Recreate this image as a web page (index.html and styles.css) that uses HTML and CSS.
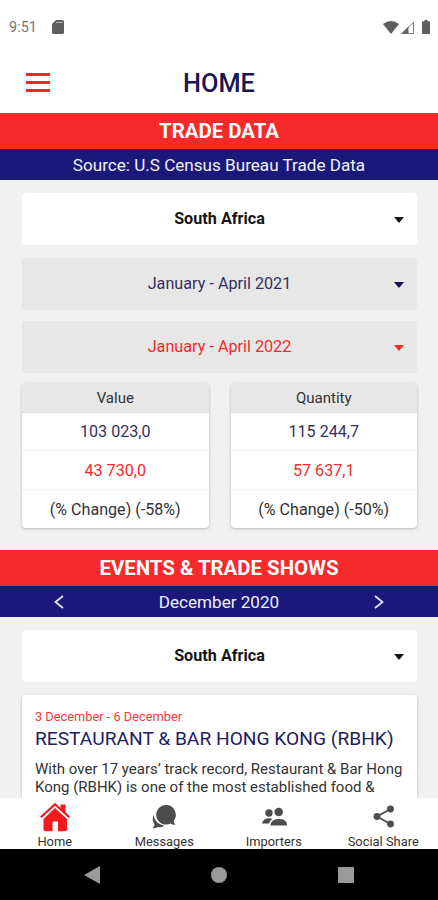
FILE: index.html
```
<!DOCTYPE html>
<html lang="en">
<head>
<meta charset="utf-8">
<meta name="viewport" content="width=device-width, initial-scale=1.0">
<title>Home</title>
<link rel="stylesheet" href="styles.css">
</head>
<body>
<div class="app">
	<div class="statusbar">
		<span class="time">9:51</span>
		<svg class="sd" width="12" height="14" viewBox="0 0 12 14"><path fill="#5e5e5e" d="M4 0h6.500Q12 0 12 1.500v11Q12 14 10.500 14h-9Q0 14 0 12.500V4z"/><path stroke="#bbb" d="M4 2.500h6.500"/></svg>
		<div class="signals">
			<svg width="16" height="13" viewBox="0 0 16 13"><path fill="#5e5e5e" d="M0 3Q8-3 16 3L8 13z"/></svg>
			<svg width="13" height="13" viewBox="0 0 13 13"><path fill="none" stroke="#777" d="M1.200 12.500L12.500 1.200v11.300z"/><path fill="#666" d="M0 13L7.500 5.500V13z"/></svg>
			<svg class="battery" width="8" height="14" viewBox="0 0 8 14"><path fill="#5e5e5e" d="M2.500 0h3v1.300H7q1 0 1 1V13q0 1-1 1H1q-1 0-1-1V2.300q0-1 1-1h1.500z"/></svg>
		</div>
	</div>

	<div class="header">
		<a class="menu" href="#"><i></i><i></i><i></i></a>
		<h1>HOME</h1>
	</div>

	<div class="content">
		<h2 class="bar-red">TRADE DATA</h2>
		<div class="bar-blue">Source: U.S Census Bureau Trade Data</div>

		<div class="section">
			<div class="select country">South Africa</div>
			<div class="select period navy">January - April 2021</div>
			<div class="select period red">January - April 2022</div>
			<div class="stats">
				<ul class="stat">
					<li class="title">Value</li>
					<li class="navy">103 023,0</li>
					<li class="red">43 730,0</li>
					<li>(% Change) (-58%)</li>
				</ul>
				<ul class="stat">
					<li class="title">Quantity</li>
					<li class="navy">115 244,7</li>
					<li class="red">57 637,1</li>
					<li>(% Change) (-50%)</li>
				</ul>
			</div>
		</div>

		<h2 class="bar-red">EVENTS &amp; TRADE SHOWS</h2>
		<div class="bar-blue month">
			<svg width="10" height="14" viewBox="0 0 10 14"><path d="M9 1L1.500 7 9 13"/></svg>
			<span>December 2020</span>
			<svg width="10" height="14" viewBox="0 0 10 14"><path d="M1 1l7.500 6L1 13"/></svg>
		</div>

		<div class="section">
			<div class="select country">South Africa</div>
			<div class="event">
				<div class="date">3 December - 6 December</div>
				<h3>RESTAURANT &amp; BAR HONG KONG (RBHK)</h3>
				<p>With over 17 years’ track record, Restaurant &amp; Bar Hong<br>Kong (RBHK) is one of the most established food &amp;</p>
			</div>
		</div>
	</div>

	<div class="tabs">
		<a href="#">
			<svg width="30" height="30" viewBox="0 0 30 30"><path fill="#f5191d" d="M15 6L27 17v10.500q0 1.700-1.700 1.700H18V19.500h-5.500v9.700H5.200q-1.700 0-1.700-1.700V17z"/><path fill="#f5191d" d="M20.500 2.500h5V11l-5-4.500z"/><path fill="none" stroke="#fff" stroke-width="1" d="M2 16.500L15 4.700l13 11.800"/><path fill="none" stroke="#f5191d" stroke-width="2.200" d="M.8 15.300L15 2.200l14.200 13.100"/></svg>
			Home
		</a>
		<a href="#">
			<svg width="30" height="30" viewBox="0 0 30 30"><path fill="#4d4d4d" d="M4.500 13q-2 5 1 9 0 2.500-1.700 4.300 3 .2 5-1.300 3.500 1 6.500-1.300Q6 22 4.500 13z"/><path fill="#4d4d4d" d="M17 3a9.800 9.800 0 1 0 4.500 18.500q2 1.500 5 1.200-1.700-1.500-1.700-4A9.800 9.800 0 0 0 17 3z"/></svg>
			Messages
		</a>
		<a href="#">
			<svg width="30" height="30" viewBox="0 0 30 30"><g fill="#4d4d4d"><circle cx="10" cy="11" r="3.700"/><circle cx="19.700" cy="10" r="4.300"/><path d="M3 21.500q1-5.200 7.500-5.200 1.500 0 3 .4-2.500 1.500-3.500 4.800zM11.500 23.500V22.500q1-5.500 8.500-5.500t8 5.500v1z"/></g></svg>
			Importers
		</a>
		<a href="#">
			<svg width="30" height="30" viewBox="0 0 30 30"><path fill="none" stroke="#4d4d4d" stroke-width="1.800" d="M22.500 7L9 14.500l13.500 7.500"/><g fill="#4d4d4d"><circle cx="22.500" cy="7" r="3.400"/><circle cx="9" cy="14.500" r="3.400"/><circle cx="22.500" cy="22" r="3.400"/></g></svg>
			Social Share
		</a>
	</div>

	<div class="sysnav">
		<svg width="16" height="18" viewBox="0 0 16 18"><path fill="#9a9a9a" d="M16 0v18L0 9z"/></svg>
		<i class="circle"></i>
		<i class="square"></i>
	</div>
</div>
</body>
</html>
```
FILE: styles.css
```
* {
box-sizing: border-box;
}
body {
margin: 0;
font-family: Roboto, sans-serif;
color: #333;
background: #fff;
}
h1, h2, h3, p, ul {
margin: 0;
padding: 0;
list-style: none;
}
a {
color: inherit;
text-decoration: none;
}
svg {
display: block;
flex: none;
}
.app {
display: flex;
flex-direction: column;
height: 900px;
overflow: hidden;
}
.navy {
color: #35305f;
}
.red {
color: #f52a2c;
}

.statusbar {
display: flex;
align-items: center;
height: 54px;
padding: 0 8px 0 9px;
font-size: 14.500px;
color: #777;
}
.sd {
margin-left: 15px;
}
.signals {
display: flex;
align-items: center;
margin-left: auto;
gap: 2px;
}
.battery {
margin-left: 6px;
}

.header {
display: grid;
grid-template-columns: 62px 1fr 62px;
align-items: center;
height: 59px;
}
.menu {
display: grid;
gap: 5px;
padding: 0 12px 2px 26px;
}
.menu i {
height: 3px;
background: #f32528;
}
.header h1 {
font-size: 25.300px;
line-height: 30px;
font-weight: 500;
text-align: center;
color: #1b1552;
}

.content {
flex: 1;
min-height: 0;
overflow: hidden;
background: #f1f1f1;
}
.bar-red {
height: 36px;
line-height: 37px;
background: #f62a2b;
color: #fff;
font-size: 20.400px;
font-weight: 700;
text-align: center;
}
.bar-blue {
height: 31px;
line-height: 32px;
background: #1a197b;
color: #f0f0fa;
font-size: 17.100px;
text-align: center;
}
.month {
display: flex;
align-items: center;
justify-content: space-between;
padding: 0 54px;
}
.month path {
fill: none;
stroke: #e4e4f4;
stroke-width: 1.800;
}

.section {
padding: 13px 21px 22px 22px;
}
.select {
position: relative;
height: 52px;
line-height: 52px;
margin-bottom: 10.500px;
border-radius: 4px;
background: #e7e7e7;
font-size: 16.200px;
text-align: center;
}
.select::after {
content: "";
position: absolute;
top: 24px;
right: 13px;
border: 5px solid transparent;
border-top: 6px solid;
border-bottom: 0;
}
.country {
margin-bottom: 13px;
background: #fff;
color: #151515;
font-weight: 700;
}
.period.navy::after {
color: #130d55;
}

.stats {
display: grid;
grid-template-columns: 1fr 1fr;
gap: 22px;
}
.stat {
overflow: hidden;
height: 145px;
border-radius: 4px;
background: #fff;
box-shadow: 0 1px 3px rgba(0, 0, 0, 0.25);
font-size: 16.100px;
text-align: center;
}
.stat li {
height: 39px;
line-height: 39px;
border-top: 1px solid #eee;
}
.stat .title {
height: 29px;
line-height: 30px;
border: 0;
background: #e7e7e7;
font-size: 15px;
}
.stat .title + li {
height: 38px;
line-height: 38px;
border-color: #ddd;
}

.event {
height: 200px;
padding: 14px 13px;
border-radius: 4px;
background: #fff;
box-shadow: 0 1px 3px rgba(0, 0, 0, 0.25);
}
.date {
font-size: 12.800px;
line-height: 16px;
color: #f5393b;
}
.event h3 {
margin: 1px 0 9px;
font-size: 19.200px;
line-height: 26px;
font-weight: 400;
color: #221c60;
white-space: nowrap;
}
.event p {
font-size: 15px;
line-height: 17.500px;
white-space: nowrap;
}

.tabs {
display: grid;
grid-template-columns: repeat(4, 1fr);
height: 51px;
background: #fff;
}
.tabs a {
display: flex;
flex-direction: column;
align-items: center;
padding-top: 4px;
font-size: 12.900px;
line-height: 20px;
white-space: nowrap;
}
.sysnav {
display: flex;
align-items: center;
justify-content: space-between;
height: 51px;
padding: 0 84px;
background: #000;
}
.circle, .square {
width: 16px;
height: 16px;
background: #9a9a9a;
}
.circle {
border-radius: 50%;
}
```
